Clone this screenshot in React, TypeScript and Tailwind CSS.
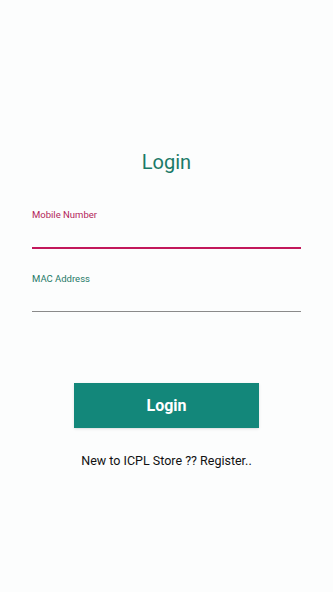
export default function App() {
  return (
    <div className="min-h-[592px] w-full bg-[#fcfdfd] font-['Roboto',sans-serif]">
      <div className="flex flex-col px-8 pt-[148px]">
        <h1 className="text-center text-[20px] leading-7 text-[#1b7a68]">Login</h1>

        <div className="mt-[31px] flex flex-col">
          <label className="text-[9.5px] leading-4 text-[#b3245a]">Mobile Number</label>
          <div className="h-[24px]" />
          <div className="h-[2px] w-full bg-[#c2185b]" />
        </div>

        <div className="mt-[22px] flex flex-col">
          <label className="text-[9.5px] leading-4 text-[#1f7a68]">MAC Address</label>
          <div className="h-[24px]" />
          <div className="h-px w-full bg-[#8a8a8a]" />
        </div>

        <div className="mt-[71px] flex justify-center">
          <button className="h-[45px] w-[185px] bg-[#13877a] text-[16px] font-bold text-white shadow-sm">
            Login
          </button>
        </div>

        <p className="mt-[25px] text-center text-[12.5px] leading-4 text-[#111]">New to ICPL Store ?? Register..</p>
      </div>
    </div>
  );
}
